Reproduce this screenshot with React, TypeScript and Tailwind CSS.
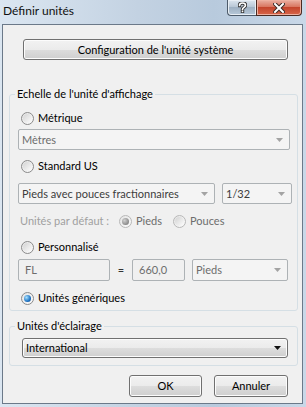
import {ReactNode} from "react";

function Radio({checked = false, disabled = false}: {checked?: boolean; disabled?: boolean}) {
    return <span
        className={"flex w-[13px] h-[13px] shrink-0 items-center justify-center rounded-full border bg-[linear-gradient(135deg,#e4e4e4,#fbfbfb)] " +
            (disabled ? "border-[#b8b8b8]" : "border-[#8a8a8a]")}>
        {checked
            ? <span className={"w-[7px] h-[7px] rounded-full " + (disabled
                ? "bg-[radial-gradient(circle_at_35%_35%,#d0d0d0,#8a8a8a_70%,#6e6e6e)]"
                : "bg-[radial-gradient(circle_at_35%_35%,#a8e2ff,#1f74c4_60%,#0c3f80)]")}/>
            : <span className="w-[9px] h-[9px] rounded-full bg-[linear-gradient(135deg,#d3d3d3,#fdfdfd)]"/>}
    </span>;
}

function Arrow({disabled = false}: {disabled?: boolean}) {
    return <svg width="7" height="4" viewBox="0 0 7 4" className="shrink-0">
        <path d="M0 0h7L3.5 4z" fill={disabled ? "#a3a3a3" : "#111"}/>
    </svg>;
}

function Select({text, width, dark = false}: {text: string; width: string; dark?: boolean}) {
    return <div
        className={"flex h-[21px] items-center justify-between rounded-[2px] border border-[#adb2b5] bg-[#f4f4f4] pl-[3px] pr-[6px] " + width}>
        <span className={dark ? "text-[#3c3c3c]" : "text-[#6d6d6d]"}>{text}</span>
        <Arrow disabled/>
    </div>;
}

function Field({text, width}: {text: string; width: string}) {
    return <div
        className={"flex h-[22px] items-center rounded-[2px] border border-[#adb2b5] bg-[#f0f0f0] px-[6px] text-[#6d6d6d] " + width}>
        {text}
    </div>;
}

function Button({children, className}: {children: ReactNode; className: string}) {
    return <div
        className={"flex items-center justify-center rounded-[3px] border border-[#707070] bg-[linear-gradient(#f2f2f2,#ebebeb_50%,#dddddd_50%,#cfcfcf)] shadow-[inset_0_0_0_1px_#fcfcfc] text-black " + className}>
        {children}
    </div>;
}

function Group({label, className, children}: {label: string; className: string; children: ReactNode}) {
    return <div className={"relative ml-[6px] w-[289px] rounded-[3px] border border-[#d5dfe5] " + className}>
        <span className="absolute left-[5px] top-[-9px] bg-[#f0f0f0] px-[2px] leading-[16px]">{label}</span>
        {children}
    </div>;
}

function RadioRow({label, checked = false, className}: {label: string; checked?: boolean; className: string}) {
    return <div className={"flex h-[16px] items-center gap-[4px] pl-[11px] " + className}>
        <Radio checked={checked}/>
        <span>{label}</span>
    </div>;
}

export default function App() {
    return <div
        className="flex h-[407px] w-[306px] flex-col overflow-hidden bg-[linear-gradient(90deg,#dbe6f1,#c3d2e2_45%,#b8cadd_70%,#c9d8e8)] font-['Lato',sans-serif] text-[11px] leading-[16px] text-black">
        <div className="flex h-[24px] shrink-0 items-start justify-between">
            <span className="pl-[3px] pt-[3px] text-[12px] text-[#111]">Définir unités</span>
            <div className="mr-[4px] flex h-[16px]">
                <div
                    className="flex w-[29px] items-center justify-center rounded-bl-[4px] border border-r-0 border-t-0 border-[#4d5b6a] bg-[linear-gradient(#dde6ef,#b5c4d3_50%,#9fb1c3_50%,#b7c8d8)] shadow-[inset_0_0_0_1px_#e8eef4]">
                    <svg width="9" height="11" viewBox="0 0 9 11">
                        <path d="M1.5 3.5C1.5 1.5 3 1 4.5 1S7.5 1.8 7.5 3.3c0 2-3 2-3 4M4.5 9.2v.3" fill="none" stroke="#333" strokeWidth="3.4" strokeLinecap="square"/>
                        <path d="M1.5 3.5C1.5 1.5 3 1 4.5 1S7.5 1.8 7.5 3.3c0 2-3 2-3 4M4.5 9.2v.3" fill="none" stroke="#fff" strokeWidth="1.6" strokeLinecap="square"/>
                    </svg>
                </div>
                <div
                    className="flex w-[46px] items-center justify-center rounded-br-[4px] border border-t-0 border-[#4b2a22] bg-[linear-gradient(#eab0a2,#d7705a_50%,#c4452d_50%,#d7664a)] shadow-[inset_0_0_0_1px_#eeb0a0]">
                    <svg width="12" height="10" viewBox="0 0 12 10">
                        <path d="M2 1l8 8M10 1l-8 8" stroke="#3a2a26" strokeWidth="4" strokeLinecap="square"/>
                        <path d="M2 1l8 8M10 1l-8 8" stroke="#fff" strokeWidth="2" strokeLinecap="square"/>
                    </svg>
                </div>
            </div>
        </div>

        <div className="ml-[2px] h-[380px] w-[301px] shrink-0 border border-[#6b7989] bg-[#f0f0f0]">
            <Button className="ml-[20px] mt-[14px] h-[21px] w-[265px]">Configuration de l'unité système</Button>

            <Group label="Echelle de l'unité d'affichage" className="mt-[34px] h-[217px]">
                <RadioRow label="Métrique" className="mt-[15px]"/>
                <div className="ml-[8px] mt-[3px]">
                    <Select text="Mètres" width="w-[272px]"/>
                </div>

                <RadioRow label="Standard US" className="mt-[8px]"/>
                <div className="ml-[8px] mt-[9px] flex gap-[7px]">
                    <Select text="Pieds avec pouces fractionnaires" width="w-[197px]" dark/>
                    <Select text="1/32" width="w-[70px]" dark/>
                </div>

                <div className="ml-[10px] mt-[9px] flex h-[16px] items-center text-[#6d6d6d]">
                    <span className="w-[99px] text-[#a0a0a0]">Unités par défaut :</span>
                    <span className="flex w-[54px] items-center gap-[4px]">
                        <Radio checked disabled/>
                        <span>Pieds</span>
                    </span>
                    <span className="flex items-center gap-[4px]">
                        <Radio disabled/>
                        <span>Pouces</span>
                    </span>
                </div>

                <RadioRow label="Personnalisé" className="mt-[10px]"/>
                <div className="ml-[8px] mt-[4px] flex items-center">
                    <Field text="FL" width="w-[92px]"/>
                    <span className="w-[22px] text-center text-[#333]">=</span>
                    <Field text="660,0" width="w-[53px]"/>
                    <div className="ml-[7px] flex h-[22px] w-[96px] items-center justify-between rounded-[2px] border border-[#adb2b5] bg-[#f4f4f4] pl-[3px] pr-[6px] text-[#6d6d6d]">
                        <span>Pieds</span>
                        <Arrow disabled/>
                    </div>
                </div>

                <RadioRow label="Unités génériques" checked className="mt-[9px]"/>
            </Group>

            <Group label="Unités d'éclairage" className="mt-[15px] h-[40px]">
                <Button className="ml-[12px] mt-[11px] h-[20px] w-[266px] !justify-between pl-[3px] pr-[6px]">
                    <span>International</span>
                    <Arrow/>
                </Button>
            </Group>

            <div className="mt-[9px] flex justify-end gap-[12px] pr-[14px]">
                <Button className="h-[22px] w-[73px]">OK</Button>
                <Button className="h-[22px] w-[74px]">Annuler</Button>
            </div>
        </div>
    </div>;
}
